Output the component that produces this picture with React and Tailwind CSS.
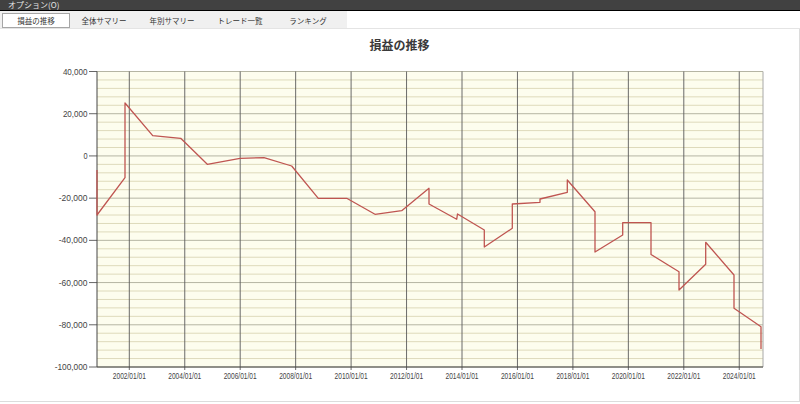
import React from 'react';

const jp = { fontFamily: '"Noto Sans CJK JP", "Noto Sans", sans-serif' };

const tabs = ['損益の推移', '全体サマリー', '年別サマリー', 'トレード一覧', 'ランキング'];

// plot bounds in page coordinates
const L = 97;
const R = 763;
const T = 71.5;
const B = 367;
const yOf = (v) => T + ((40000 - v) / 140000) * (B - T);

const points = [
  [97, 170], [97, 215], [125, 177.7], [125, 103], [152.7, 135.7], [180.7, 138.3],
  [207.3, 164.3], [240, 158.3], [264, 157.7], [291.7, 166], [318.3, 198.3],
  [346.7, 198.3], [375, 214.3], [401.7, 210.7], [429, 188.3], [429, 204],
  [456.7, 219.3], [457.5, 214], [484.3, 230], [484.3, 247], [512.3, 228.3],
  [512.3, 204], [540, 202.3], [540, 199], [567.3, 192.3], [567.3, 180],
  [595, 211.7], [595, 252], [622.7, 235], [622.7, 222.7], [651, 222.7],
  [651, 254.5], [679, 271.7], [679, 290], [705.7, 264.3], [705.7, 242.3],
  [734, 275], [734, 308.3], [761, 326.7], [761, 349],
];

const yLabels = [40000, 20000, 0, -20000, -40000, -60000, -80000, -100000];
const years = Array.from({ length: 12 }, (_, i) => 2002 + i * 2);

const Chart = () => {
  const minor = Array.from({ length: 36 }, (_, i) => 40000 - i * 4000);
  return (
    <svg width="799" height="341" viewBox="0 60 799 341" className="block">
      <rect x={L} y={T} width={R - L} height={B - T} fill="#fdfdee" />
      {minor.map((v) => (
        <line
          key={v}
          x1={L}
          x2={R}
          y1={yOf(v)}
          y2={yOf(v)}
          stroke={v % 20000 === 0 ? '#b5b5a3' : '#dedabb'}
          strokeWidth="1"
        />
      ))}
      {years.map((yr, i) => {
        const x = 129.3 + i * 55.45;
        return (
          <g key={yr}>
            <line x1={x} x2={x} y1={T} y2={B + 3} stroke="#5a5a5a" strokeWidth="0.9" />
            <text
              x={x - 16.5}
              y={379}
              fontSize="8.5"
              textLength="33"
              lengthAdjust="spacingAndGlyphs"
              fill="#444"
              fontFamily='"Liberation Sans", Arial, sans-serif'
            >
              {`${yr}/01/01`}
            </text>
          </g>
        );
      })}
      {yLabels.map((v) => {
        const y = yOf(v);
        const s = v.toLocaleString('en-US');
        return (
          <g key={v}>
            <line x1={L - 8} x2={L} y1={y} y2={y} stroke="#555" strokeWidth="0.9" />
            <text
              x={87.5}
              y={y + 3}
              fontSize="8.5"
              textAnchor="end"
              textLength={s.length * 4.1}
              lengthAdjust="spacingAndGlyphs"
              fill="#444"
              fontFamily='"Liberation Sans", Arial, sans-serif'
            >
              {s}
            </text>
          </g>
        );
      })}
      <line x1={R} x2={R} y1={T} y2={B} stroke="#a8a8a8" strokeWidth="1" />
      <line x1={L} x2={L} y1={T} y2={B} stroke="#444" strokeWidth="1" />
      <line x1={L} x2={R} y1={B} y2={B} stroke="#444" strokeWidth="1" />
      <polyline
        points={points.map((p) => p.join(',')).join(' ')}
        fill="none"
        stroke="#bf5551"
        strokeWidth="1.3"
        strokeLinejoin="round"
      />
    </svg>
  );
};

export default function App() {
  return (
    <div className="w-[800px] h-[404px] bg-white overflow-hidden" style={jp}>
      <div className="h-[11px] bg-[#414141] border-b border-black flex items-center pl-[8px]">
        <span className="text-[8px] leading-none text-[#e6e6e6]">オプション(O)</span>
      </div>
      <div className="h-[18px] flex border-b border-[#e4e4e4]">
        <div className="flex bg-[#f0f0f0] pl-[2px] pt-[2px] w-[347px]">
          {tabs.map((t, i) => (
            <div
              key={t}
              className={`w-[68px] h-[15px] flex items-center justify-center text-[7.5px] leading-none text-[#333] ${
                i === 0 ? 'bg-white border border-[#a6a6a6]' : ''
              }`}
            >
              {t}
            </div>
          ))}
        </div>
        <div className="flex-1 bg-white" />
      </div>
      <div className="h-[373px] border-r border-b border-[#dcdcdc]">
        <div className="h-[31px] flex items-center justify-center">
          <span className="text-[12px] font-bold text-[#3a3a3a] leading-none">損益の推移</span>
        </div>
        <Chart />
      </div>
    </div>
  );
}
